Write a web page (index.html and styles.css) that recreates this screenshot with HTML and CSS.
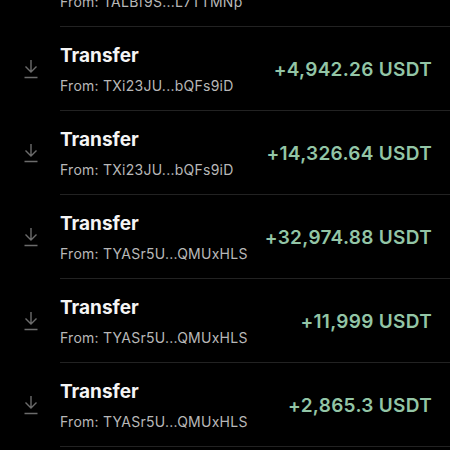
FILE: index.html
```html
<!DOCTYPE html>
<html lang="en">
<head>
    <meta charset="UTF-8">
    <meta name="viewport" content="width=device-width, initial-scale=1.0">
    <title>Transfers</title>
    <link rel="stylesheet" href="styles.css">
</head>
<body>
    <div class="tx-list">
        <div class="tx-row">
            <div class="tx-icon">
                <svg width="14" height="20" viewBox="0 0 14 20"><path d="M7 1v12M1.5 7.5L7 13l5.5-5.5M0.5 18.5h13" fill="none" stroke="currentColor" stroke-width="1.4"/></svg>
            </div>
            <div class="tx-body">
                <div class="tx-text">
                    <div class="tx-title">Transfer</div>
                    <div class="tx-from">From: TALBf9S...L7TTMNp</div>
                </div>
                <div class="tx-amount">+1,250 USDT</div>
            </div>
        </div>
        <div class="tx-row">
            <div class="tx-icon">
                <svg width="14" height="20" viewBox="0 0 14 20"><path d="M7 1v12M1.5 7.5L7 13l5.5-5.5M0.5 18.5h13" fill="none" stroke="currentColor" stroke-width="1.4"/></svg>
            </div>
            <div class="tx-body">
                <div class="tx-text">
                    <div class="tx-title">Transfer</div>
                    <div class="tx-from">From: TXi23JU...bQFs9iD</div>
                </div>
                <div class="tx-amount">+4,942.26 USDT</div>
            </div>
        </div>
        <div class="tx-row">
            <div class="tx-icon">
                <svg width="14" height="20" viewBox="0 0 14 20"><path d="M7 1v12M1.5 7.5L7 13l5.5-5.5M0.5 18.5h13" fill="none" stroke="currentColor" stroke-width="1.4"/></svg>
            </div>
            <div class="tx-body">
                <div class="tx-text">
                    <div class="tx-title">Transfer</div>
                    <div class="tx-from">From: TXi23JU...bQFs9iD</div>
                </div>
                <div class="tx-amount">+14,326.64 USDT</div>
            </div>
        </div>
        <div class="tx-row">
            <div class="tx-icon">
                <svg width="14" height="20" viewBox="0 0 14 20"><path d="M7 1v12M1.5 7.5L7 13l5.5-5.5M0.5 18.5h13" fill="none" stroke="currentColor" stroke-width="1.4"/></svg>
            </div>
            <div class="tx-body">
                <div class="tx-text">
                    <div class="tx-title">Transfer</div>
                    <div class="tx-from">From: TYASr5U...QMUxHLS</div>
                </div>
                <div class="tx-amount">+32,974.88 USDT</div>
            </div>
        </div>
        <div class="tx-row">
            <div class="tx-icon">
                <svg width="14" height="20" viewBox="0 0 14 20"><path d="M7 1v12M1.5 7.5L7 13l5.5-5.5M0.5 18.5h13" fill="none" stroke="currentColor" stroke-width="1.4"/></svg>
            </div>
            <div class="tx-body">
                <div class="tx-text">
                    <div class="tx-title">Transfer</div>
                    <div class="tx-from">From: TYASr5U...QMUxHLS</div>
                </div>
                <div class="tx-amount">+11,999 USDT</div>
            </div>
        </div>
        <div class="tx-row">
            <div class="tx-icon">
                <svg width="14" height="20" viewBox="0 0 14 20"><path d="M7 1v12M1.5 7.5L7 13l5.5-5.5M0.5 18.5h13" fill="none" stroke="currentColor" stroke-width="1.4"/></svg>
            </div>
            <div class="tx-body">
                <div class="tx-text">
                    <div class="tx-title">Transfer</div>
                    <div class="tx-from">From: TYASr5U...QMUxHLS</div>
                </div>
                <div class="tx-amount">+2,865.3 USDT</div>
            </div>
        </div>
    </div>
</body>
</html>
```

FILE: styles.css
```css
body {
    margin: 0;
    background: #000;
    font-family: Inter, 'Noto Sans', Arial, sans-serif;
    overflow: hidden;
    height: 100vh;
}
.tx-list {
    margin-top: -57px;
}
.tx-row {
    display: flex;
    height: 84px;
}
.tx-icon {
    width: 60px;
    box-sizing: border-box;
    padding-left: 24px;
    padding-top: 32px;
    color: #6c6c6c;
}
.tx-icon svg {
    display: block;
}
.tx-body {
    flex: 1;
    display: flex;
    justify-content: space-between;
    align-items: center;
    border-bottom: 1px solid #222;
    padding-right: 18px;
}
.tx-text {
    padding-top: 3px;
}
.tx-title {
    font-size: 19px;
    line-height: 24px;
    font-weight: 700;
    color: #f5f5f5;
}
.tx-from {
    font-size: 14px;
    line-height: 20px;
    margin-top: 8px;
    letter-spacing: 0.25px;
    color: #b8b8b8;
}
.tx-amount {
    font-size: 19px;
    font-weight: 600;
    letter-spacing: 0.3px;
    color: #93c5a6;
    padding-top: 2px;
}
```
